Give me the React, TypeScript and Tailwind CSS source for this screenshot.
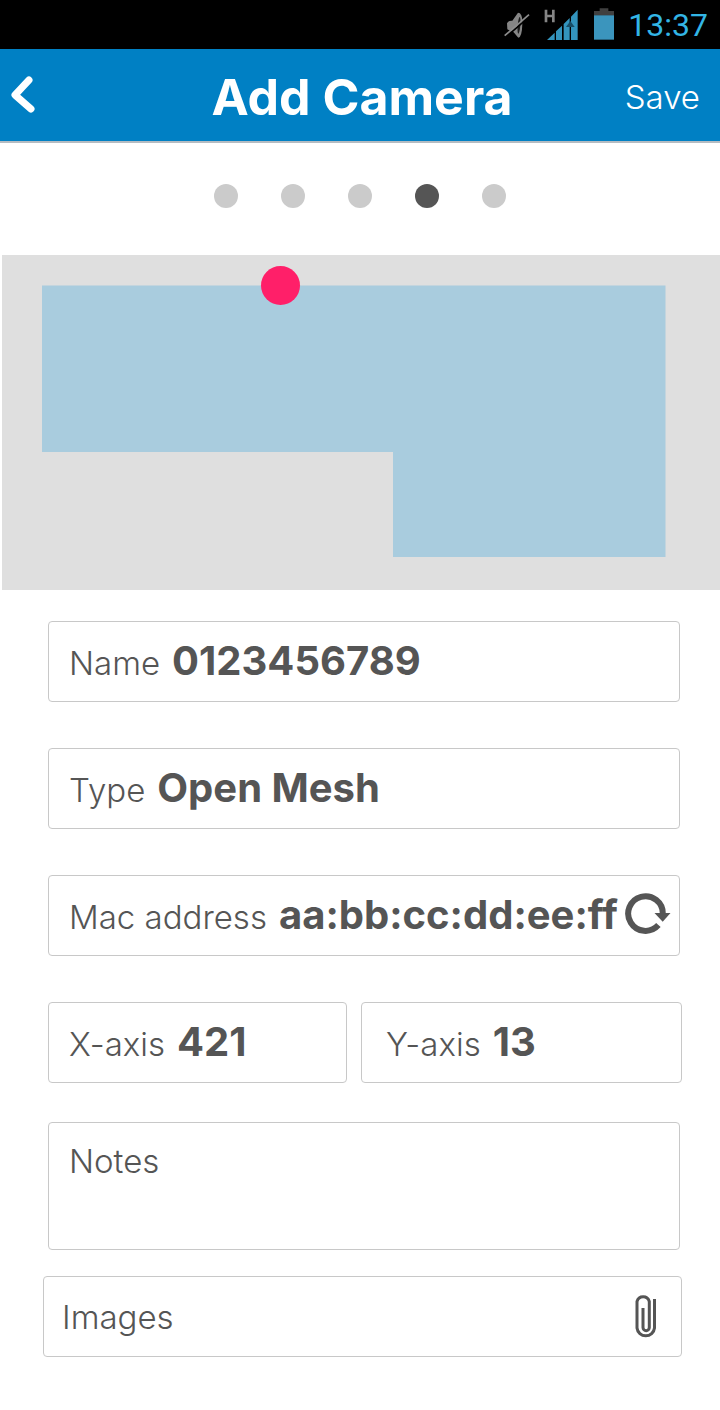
import { useState } from "react";
import type { ReactNode } from "react";

function MuteIcon() {
  return (
    <svg viewBox="0 0 78 84" className="h-7 w-[26px]" aria-hidden="true">
      <path d="M9 37 Q13 28 25 29 L42 5 Q56 5 55 38 Q54 78 43 80 L29 64 L20 60 L10 55 Z" fill="#858585" />
      <ellipse cx="45" cy="43" rx="4" ry="25" fill="#1c1c1c" transform="rotate(5 45 43)" />
      <path d="M4 79 L77 16" stroke="#000" strokeWidth="5" />
      <path d="M2 74 L75 11" stroke="#8d8d8d" strokeWidth="5" />
    </svg>
  );
}

function SignalIcon() {
  return (
    <svg viewBox="0 0 102 96" className="h-8 w-[34px]" aria-hidden="true">
      <path d="M6 2 V40 M28 2 V40 M6 21 H28" stroke="#858585" strokeWidth="8" fill="none" />
      <path d="M9 93 L32 71 V93 Z M36 67 L54 50 V93 H36 Z M59 45 L77 27 V93 H59 Z M81 23 L101 2 V93 H81 Z" fill="#3394bd" />
      <path d="M79 36 L92 54 H66 Z" fill="#174d66" />
    </svg>
  );
}

function BatteryIcon() {
  return (
    <svg viewBox="0 0 60 94" className="h-8 w-5" aria-hidden="true">
      <path d="M0 8 H17 V0 H43 V8 H60 V22 H0 Z" fill="#404040" />
      <path d="M0 21 H60 V94 H0 Z" fill="#3b95bd" />
    </svg>
  );
}

function RefreshIcon() {
  return (
    <svg viewBox="0 0 46 42" className="h-[42px] w-[46px]" aria-hidden="true">
      <path d="M33.4 32.1 A17.3 17.3 0 1 1 37.8 21" fill="none" stroke="#555" strokeWidth="6" />
      <path d="M29.5 20 H45.5 L37.7 28.8 Z" fill="#555" />
    </svg>
  );
}

function PaperclipIcon() {
  return (
    <svg viewBox="0 0 22 47" className="h-[47px] w-[22px]" aria-hidden="true">
      <path
        d="M19.5 6 V35 A8.8 8.8 0 0 1 2 35 V8.5 A6.4 6.4 0 0 1 14.3 8.5 V34.5 A3.1 3.1 0 0 1 8 34.5 V15"
        fill="none"
        stroke="#555"
        strokeWidth="3"
      />
    </svg>
  );
}

function StatusBar() {
  return (
    <div className="flex h-[49px] items-center justify-end bg-black pr-3">
      <MuteIcon />
      <div className="ml-[14px]">
        <SignalIcon />
      </div>
      <div className="mr-[14px] ml-4 pb-0.5">
        <BatteryIcon />
      </div>
      <time className="font-['Roboto',sans-serif] text-[32px] leading-none font-normal text-[#33b5e5]">13:37</time>
    </div>
  );
}

function Header() {
  return (
    <header className="grid h-[94px] grid-cols-[1fr_auto_1fr] items-center border-b-2 border-[#b5bcc2] bg-[#0080c4] pr-5 pl-6 text-white">
      <button type="button" aria-label="Back" className="-ml-4 justify-self-start">
        <svg viewBox="0 0 30 40" className="h-10 w-[30px]" aria-hidden="true">
          <path d="M21 5 L7 20 L23 34" fill="none" stroke="#fff" strokeWidth="7" strokeLinecap="round" strokeLinejoin="round" />
        </svg>
      </button>
      <h1 className="pt-1 text-[50px] leading-none font-bold">Add Camera</h1>
      <button type="button" className="justify-self-end pt-1 text-[33px] leading-none font-light">
        Save
      </button>
    </header>
  );
}

function Steps({ current, total }: { current: number; total: number }) {
  return (
    <ol className="flex justify-center gap-[43px] pt-[41px] pb-[47px]">
      {Array.from({ length: total }, (_, i) => (
        <li
          key={i}
          aria-current={i === current ? "step" : undefined}
          className={i === current ? "size-6 rounded-full bg-[#555]" : "size-6 rounded-full bg-[#cbcbcb]"}
        />
      ))}
    </ol>
  );
}

function FloorPlan() {
  return (
    <svg viewBox="0 0 718 335" className="block w-full bg-[#dfdfdf]" role="img">
      <path d="M40 30.5 H663.5 V302 H391 V197 H40 Z" fill="#a9ccde" />
      <circle cx="278.5" cy="30.5" r="19.5" fill="#ff1f69" />
    </svg>
  );
}

interface FieldProps {
  id: string;
  label: string;
  initial: string;
  inset?: string;
  action?: ReactNode;
}

function Field({ id, label, initial, inset = "pl-5", action }: FieldProps) {
  const [value, setValue] = useState(initial);
  return (
    <div className={`flex h-[81px] min-w-0 items-center rounded border border-[#c8c8c8] pr-2 ${inset}`}>
      <div className="flex min-w-0 flex-1 items-baseline gap-3">
        <label htmlFor={id} className="shrink-0 text-[33px] leading-[48px] font-light">
          {label}
        </label>
        <input
          id={id}
          value={value}
          onChange={(e) => setValue(e.target.value)}
          className="h-12 w-full min-w-0 flex-1 bg-transparent text-[40px] leading-[48px] font-bold outline-none"
        />
      </div>
      {action}
    </div>
  );
}

export default function App() {
  return (
    <div className="min-h-screen bg-white font-['Inter',sans-serif] text-[#555]">
      <StatusBar />
      <Header />
      <main>
        <Steps current={3} total={5} />
        <div className="pl-0.5">
          <FloorPlan />
        </div>
        <form className="px-10 pt-[31px] pb-[53px]" onSubmit={(e) => e.preventDefault()}>
          <div className="flex flex-col gap-[46px] pl-2">
            <Field id="name" label="Name" initial="0123456789" />
            <Field id="type" label="Type" initial="Open Mesh" />
            <Field
              id="mac"
              label="Mac address"
              initial="aa:bb:cc:dd:ee:ff"
              action={
                <button type="button" aria-label="Refresh" className="shrink-0 pb-1">
                  <RefreshIcon />
                </button>
              }
            />
            <div className="-mr-0.5 grid grid-cols-[299fr_321fr] gap-[14px]">
              <Field id="x-axis" label="X-axis" initial="421" />
              <Field id="y-axis" label="Y-axis" initial="13" inset="pl-6" />
            </div>
          </div>
          <div className="mt-[39px] ml-2 flex h-32 gap-3 rounded border border-[#c8c8c8] px-5 pt-[14px]">
            <label htmlFor="notes" className="text-[33px] leading-[48px] font-light">
              Notes
            </label>
            <textarea id="notes" className="min-w-0 flex-1 resize-none bg-transparent text-[33px] leading-[48px] outline-none" />
          </div>
          <div className="-mr-0.5 mt-[26px] ml-[3px] flex h-[81px] items-center justify-between rounded border border-[#c8c8c8] pr-6 pl-[18px]">
            <label htmlFor="images" className="text-[33px] leading-[48px] font-light">
              Images
            </label>
            <button id="images" type="button">
              <PaperclipIcon />
            </button>
          </div>
        </form>
      </main>
    </div>
  );
}
